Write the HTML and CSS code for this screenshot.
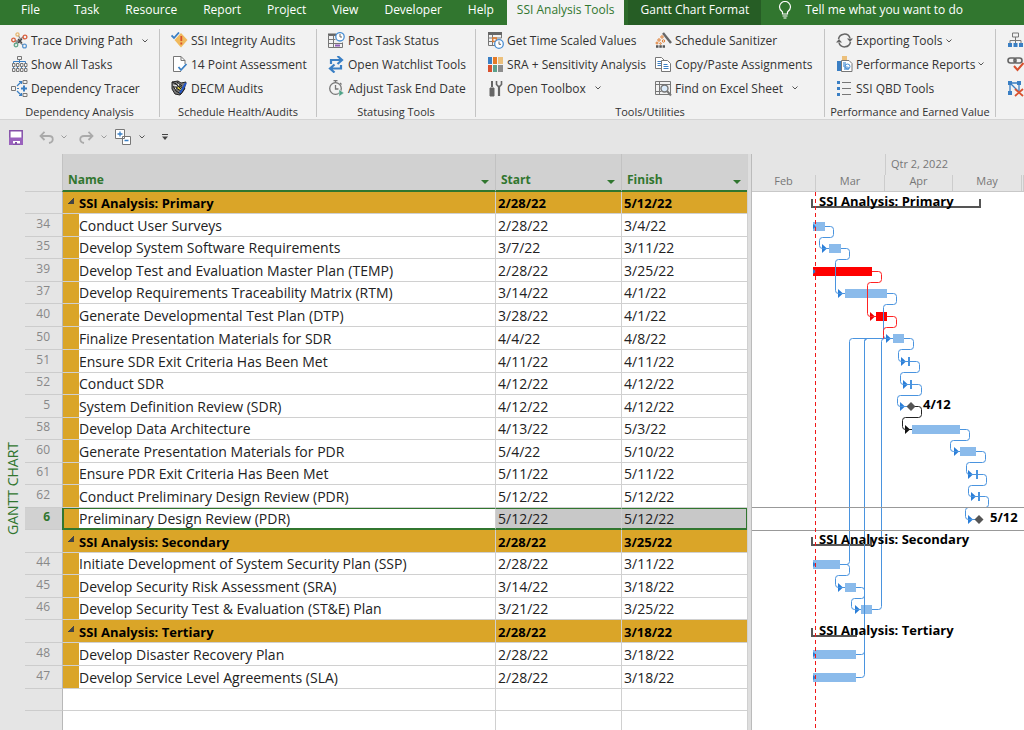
FILE: index.html
```html
<!DOCTYPE html>
<html lang="en">
<head>
  <meta charset="utf-8">
  <meta name="viewport" content="width=device-width, initial-scale=1">
  <title>SSI Analysis Tools</title>
  <link rel="stylesheet" href="styles.css">
</head>
<body>
  <nav class="tabs">
    <button class="tab tab-file">File</button>
    <button class="tab">Task</button>
    <button class="tab">Resource</button>
    <button class="tab">Report</button>
    <button class="tab">Project</button>
    <button class="tab">View</button>
    <button class="tab">Developer</button>
    <button class="tab">Help</button>
    <button class="tab active">SSI Analysis Tools</button>
    <button class="tab context">Gantt Chart Format</button>
    <button class="tab tell-me">
      <svg width="14" height="18" viewBox="0 0 14 18" fill="none" stroke="#fff" stroke-width="1.2"><path d="M4.5 13v-2C2.500 9.500 1.500 8 1.500 6a5.500 5.500 0 0 1 11 0c0 2-1 3.500-3 5v2zM4.500 15h5M5.500 17h3"/></svg>
      Tell me what you want to do
    </button>
  </nav>

  <header class="ribbon">
    <section class="group">
      <div class="tools">
        <button class="tool">
          <svg class="icon" viewBox="0 0 17 17" fill="none" stroke-width="1.3"><path d="M4 9h3l5 4M4 12l8-7M7 3l3 5" stroke="#888"/><circle cx="2.500" cy="8" r="1.800" stroke="#d9603f"/><circle cx="14" cy="5" r="1.900" stroke="#d9603f"/><circle cx="6.500" cy="2.500" r="1.600" stroke="#e9b872"/><circle cx="5" cy="13" r="1.800" stroke="#63a98c"/><circle cx="13.500" cy="14" r="1.900" stroke="#5b96d0"/><path d="M7 7l4 4M11 7l-4 4" stroke="#444"/></svg>
          Trace Driving Path
          <svg class="chev wide" viewBox="0 0 6 4"><path d="M.5.5L3 3 5.500.5"/></svg>
        </button>
        <button class="tool">
          <svg class="icon" viewBox="0 0 17 17" fill="none" stroke="#777"><path d="M6.500.5h4v3h-4z"/><path d="M8.500 4v3M2.500 8V5.500h12V8M2.500 11v2M6.500 11v2M10.500 11v2M14.500 11v2" stroke="#3a7fc4"/><path d="M1.500 7.500h2.500v3H1.500zM5.500 7.500H8v3H5.500zM9.500 7.500H12v3H9.500zM13.500 7.500H16v3h-2.500zM1.500 12.500h2.500v3H1.500zM5.500 12.500H8v3H5.500zM9.500 12.500H12v3H9.500zM13.500 12.500H16v3h-2.500z"/></svg>
          Show All Tasks
        </button>
        <button class="tool">
          <svg class="icon" viewBox="0 0 17 17" fill="none" stroke="#777"><path d="M.5 6.500h4v4h-4zM12 .5h4v3h-4zM12 13.500h4v3h-4z"/><path d="M10 8.500h6M13 5.500v6" stroke="#3a7fc4" stroke-width="2"/><path d="M6 8.500h2M6 6l4-4M6 11l4 4M8 1.500h2.500V4M8 15.500h2.500V13" stroke="#3a7fc4" stroke-width="1.200"/></svg>
          Dependency Tracer
        </button>
      </div>
      <h2 class="group-name">Dependency Analysis</h2>
    </section>

    <section class="group">
      <div class="tools">
        <button class="tool">
          <svg class="icon" viewBox="0 0 17 17" fill="none"><path d="M10 1l6.500 7L10 15.500 3.500 8z" fill="#f0b95c"/><path d="M10.300 4v5M10.300 10.500v2" stroke="#d9502c" stroke-width="1.800"/><path d="M.5 3.500L3 6l5-5.500" stroke="#3a7fc4" stroke-width="1.800"/></svg>
          SSI Integrity Audits
        </button>
        <button class="tool">
          <svg class="icon" viewBox="0 0 17 17" fill="none"><path d="M14 8V4.500L10 .5H2.500v15H10M10 .5v4h4" stroke="#777" fill="#fff"/><path d="M7.500 11l2.500 3 5.500-6" stroke="#3a7fc4" stroke-width="1.800"/></svg>
          14 Point Assessment
        </button>
        <button class="tool">
          <svg class="icon" viewBox="0 0 17 17" fill="none" stroke="#222"><path d="M1 2l6-1 3 2 5-1-2 8-4 5-5-1-3-5z" fill="#777"/><path d="M2 5l5 1 1-3M3 9l5-2 4 3" stroke="#eee"/><path d="M5 8l5 3 2-3-4-2z" fill="#d8c840"/><path d="M1 2l4 2M2 6l3 5 5 3 4-6M4 3l7 7M6 2l5 4"/><path d="M9 13l6-10" stroke="#2456c8" stroke-width="2"/></svg>
          DECM Audits
        </button>
      </div>
      <h2 class="group-name">Schedule Health/Audits</h2>
    </section>

    <section class="group">
      <div class="tools">
        <button class="tool">
          <svg class="icon" viewBox="0 0 17 17" fill="none"><path d="M8 3.500H.5v12h14v-5M.5 7.500h7M.5 11.500h14M5.500 3.500v12" stroke="#777"/><path d="M0 2.500h8" stroke="#666" stroke-width="2"/><path d="M7 13.500h5" stroke="#8e5bb5" stroke-width="2"/><circle cx="12" cy="4.800" r="4.200" fill="#fff" stroke="#4a8fd4" stroke-width="1.300"/><path d="M12 2v3h2" stroke="#666"/></svg>
          Post Task Status
        </button>
        <button class="tool">
          <svg class="icon" viewBox="0 0 17 17" fill="none" stroke="#3a7fc4" stroke-width="2.200"><path d="M3 8V4h11M9.500 0l4.500 4-4.500 4"/><path d="M13 9v3.500H2M6.500 8.500l-4.500 4 4.500 4"/></svg>
          Open Watchlist Tools
        </button>
        <button class="tool">
          <svg class="icon" viewBox="0 0 17 17" fill="none" stroke="#777" stroke-width="1.300"><circle cx="7.500" cy="8.500" r="5.800"/><path d="M5.500.7h4M7.500 1v2M7.500 5v4h3M12 3l1.500 1.500"/><path d="M11 9.500l5 3.500-5 3.500z" fill="#4fa388" stroke="#f2f2f2" stroke-width=".5"/></svg>
          Adjust Task End Date
        </button>
      </div>
      <h2 class="group-name">Statusing Tools</h2>
    </section>

    <section class="group">
      <div class="tools two-cols">
        <button class="tool">
          <svg class="icon" viewBox="0 0 17 17" fill="none"><path d="M1.500 1v12.500H8M14.500 1v5M1.500 6h13M5.500 3v10M1.500 9.500h4" stroke="#777"/><path d="M1 1.500h14" stroke="#666" stroke-width="3"/><path d="M5.800 6h3.500v3.500H5.800z" stroke="#e07a2c" stroke-width="1.300"/><circle cx="12" cy="12" r="4.300" fill="#fff" stroke="#4a8fd4" stroke-width="1.300"/><path d="M12 9.500v2.800h2" stroke="#666"/></svg>
          Get Time Scaled Values
        </button>
        <button class="tool">
          <svg class="icon" viewBox="0 0 17 17"><path fill="#3a7fc4" d="M1 1h4v7H1z"/><path fill="#e57a25" d="M6 1h4v7H6z"/><path fill="#ecc07c" d="M11 1h5v7h-5z"/><path fill="#d9512f" d="M1 9h4v7H1z"/><path fill="#5ca08b" d="M6 9h4v7H6z"/><path fill="#8d8d8d" d="M11 9h5v7h-5z"/></svg>
          SRA + Sensitivity Analysis
        </button>
        <button class="tool">
          <svg class="icon" viewBox="0 0 17 17" fill="none" stroke="#666"><path d="M5 1v6" stroke-width="2"/><path d="M3 8h4v8H3z" fill="#666"/><path d="M9.500 1v3.500L12 7l2.500-2.500V1" stroke-width="1.600"/><path d="M12 6.500V16" stroke-width="2.200"/></svg>
          Open Toolbox
          <svg class="chev wide" viewBox="0 0 6 4"><path d="M.5.5L3 3 5.500.5"/></svg>
        </button>
        <button class="tool">
          <svg class="icon" viewBox="0 0 17 17" fill="none"><path d="M8 1l8 10" stroke="#666" stroke-width="2.400"/><path d="M1 14.500h9" stroke="#555" stroke-width="2.400" stroke-dasharray="2.500 .8"/><g stroke="#e07a2c"><circle cx="7" cy="5" r="1.200"/><circle cx="4" cy="8" r="1.200"/><circle cx="8.500" cy="9" r="1.200"/><circle cx="2" cy="11" r="1"/><circle cx="5.500" cy="11.500" r=".8"/></g></svg>
          Schedule Sanitizer
        </button>
        <button class="tool">
          <svg class="icon" viewBox="0 0 17 17" fill="#fff" stroke="#777"><path d="M.5 1.500h6l3 3v8h-9z"/><path d="M2.500 5.500h4M2.500 7.500h4M2.500 9.500h4" stroke="#3a7fc4"/><path d="M6.500 4.500h6l3 3v8h-9z"/><path d="M8.500 8.500h4M8.500 10.500h5M8.500 12.500h5" stroke="#3a7fc4"/></svg>
          Copy/Paste Assignments
        </button>
        <button class="tool">
          <svg class="icon" viewBox="0 0 17 17" fill="none" stroke="#777"><path d="M.5 1.500h15v13H.5zM.5 4.500h15M.5 11.500h6M4.500 1.500v13"/><circle cx="9.500" cy="8.500" r="3.500" fill="#dcecfb" stroke-width="1.400"/><path d="M12 11l4 4.500" stroke-width="2"/></svg>
          Find on Excel Sheet
          <svg class="chev wide" viewBox="0 0 6 4"><path d="M.5.5L3 3 5.500.5"/></svg>
        </button>
      </div>
      <h2 class="group-name">Tools/Utilities</h2>
    </section>

    <section class="group">
      <div class="tools">
        <button class="tool">
          <svg class="icon" viewBox="0 0 17 17" fill="none" stroke="#666" stroke-width="1.500"><path d="M2.500 7a6 6 0 0 1 11.500-1M14.500 10A6 6 0 0 1 3 11"/><path d="M14 10l-3-3.500h6zM3 7L0 10.500h6z" fill="#666" stroke="none"/></svg>
          Exporting Tools
          <svg class="chev" viewBox="0 0 6 4"><path d="M.5.5L3 3 5.500.5"/></svg>
        </button>
        <button class="tool">
          <svg class="icon" viewBox="0 0 17 17" fill="none"><path fill="#3a7fc4" d="M1 5h4v10H1z"/><path fill="#ecc07c" d="M6 0h5v4H6z"/><path d="M5.500 15.500v-11H13l3 3v8z" fill="#fff" stroke="#777"/><path d="M7 6h3v4l3 1v3H8v-3H7z" fill="#8db9e4"/><circle cx="11.500" cy="10.500" r="2.500" stroke="#4a8fd4"/></svg>
          Performance Reports
          <svg class="chev" viewBox="0 0 6 4"><path d="M.5.5L3 3 5.500.5"/></svg>
        </button>
        <button class="tool">
          <svg class="icon" viewBox="0 0 17 17"><path d="M1 1h3v3H1zM1 7h3v3H1zM1 13h3v3H1z" fill="#3a7fc4"/><path d="M6 2.500h9M6 8.500h9M6 14.500h9" stroke="#777"/></svg>
          SSI QBD Tools
        </button>
      </div>
      <h2 class="group-name">Performance and Earned Value</h2>
    </section>

    <section class="group">
      <div class="tools">
        <button class="tool" aria-label="Hierarchy">
          <svg class="icon" viewBox="0 0 17 17" fill="none"><path d="M5.500 1h6v4h-6z" stroke="#777"/><path d="M8.500 5v7M3 12V8.500h11V12" stroke="#777"/><path d="M1 11h4v4H1zM6.500 11h4v4h-4zM12 11h4v4h-4z" fill="#3a7fc4"/></svg>
        </button>
        <button class="tool" aria-label="Check links">
          <svg class="icon" viewBox="0 0 17 17" fill="none" stroke="#666" stroke-width="1.600"><rect x="1" y="2" width="8" height="5" rx="2.500"/><rect x="7" y="2" width="8" height="5" rx="2.500"/><path d="M7 10l3.500 4 6-7" stroke="#d9512f" stroke-width="2"/></svg>
        </button>
        <button class="tool" aria-label="Remove links">
          <svg class="icon" viewBox="0 0 17 17" fill="none"><path d="M3 3h9v8M3 3v11M3 3l8 8" stroke="#3a7fc4" stroke-width="1.300"/><path d="M1 1h4v4H1zM10 1h4v4h-4zM1 11h4v4H1z" fill="#3a7fc4"/><path d="M8 9l8 7M16 9l-8 7" stroke="#d9512f" stroke-width="1.800"/></svg>
        </button>
      </div>
    </section>
  </header>

  <div class="quick">
    <button aria-label="Save"><svg width="14" height="15" viewBox="0 0 14 15" fill="none"><path d="M.8.8h12.400v13.400H.8z" fill="#fff" stroke="#8450a8" stroke-width="1.500"/><path d="M0 7.500h14V15h-3v-4H4v4H0z" fill="#9a62bd"/><path d="M6 12h2v2H6z" fill="#8450a8"/></svg></button>
    <button class="undo" aria-label="Undo"><svg width="15" height="13" viewBox="0 0 15 13" fill="none" stroke="#aaa" stroke-width="1.800"><path d="M5.500.8L1.500 5l4 4M2 5h8c5 0 5 6 0 7"/></svg></button>
    <button class="off" aria-label="Undo list"><svg class="chev" viewBox="0 0 6 4"><path d="M.5.5L3 3 5.500.5"/></svg></button>
    <button class="redo" aria-label="Redo"><svg width="15" height="13" viewBox="0 0 15 13" fill="none" stroke="#aaa" stroke-width="1.800"><path d="M9.500.8l4 4.200-4 4M13 5H5C0 5 0 11 5 12"/></svg></button>
    <button class="off" aria-label="Redo list"><svg class="chev" viewBox="0 0 6 4"><path d="M.5.5L3 3 5.500.5"/></svg></button>
    <button class="outline" aria-label="Outline"><svg width="16" height="16" viewBox="0 0 16 16" fill="#fff" stroke="#777"><path d="M.5.5h9v9h-9zM7.500 7.500h8v8h-8z"/><path d="M2.500 5h5M5 2.500v5M9.500 11.500h4" stroke="#3a7fc4" stroke-width="1.300"/></svg></button>
    <button class="list" aria-label="Outline list"><svg class="chev" viewBox="0 0 6 4"><path d="M.5.5L3 3 5.500.5"/></svg></button>
    <button class="more" aria-label="Customize toolbar"><svg width="6" height="6" viewBox="0 0 6 6"><path d="M0 .5h6" stroke="#444"/><path d="M0 2.500h6L3 6z" fill="#444"/></svg></button>
  </div>

  <main class="work">
    <div class="view-name"><span>GANTT CHART</span></div>

    <table class="sheet">
      <colgroup><col class="c-id"><col><col class="c-date"><col class="c-date"></colgroup>
      <thead>
        <tr><th class="corner"></th><th><div>Name</div></th><th><div>Start</div></th><th><div>Finish</div></th></tr>
      </thead>
      <tbody>
        <tr class="summary"><th></th><td>SSI Analysis: Primary</td><td>2/28/22</td><td>5/12/22</td></tr>
        <tr><th>34</th><td>Conduct User Surveys</td><td>2/28/22</td><td>3/4/22</td></tr>
        <tr><th>35</th><td>Develop System Software Requirements</td><td>3/7/22</td><td>3/11/22</td></tr>
        <tr><th>39</th><td>Develop Test and Evaluation Master Plan (TEMP)</td><td>2/28/22</td><td>3/25/22</td></tr>
        <tr><th>37</th><td>Develop Requirements Traceability Matrix (RTM)</td><td>3/14/22</td><td>4/1/22</td></tr>
        <tr><th>40</th><td>Generate Developmental Test Plan (DTP)</td><td>3/28/22</td><td>4/1/22</td></tr>
        <tr><th>50</th><td>Finalize Presentation Materials for SDR</td><td>4/4/22</td><td>4/8/22</td></tr>
        <tr><th>51</th><td>Ensure SDR Exit Criteria Has Been Met</td><td>4/11/22</td><td>4/11/22</td></tr>
        <tr><th>52</th><td>Conduct SDR</td><td>4/12/22</td><td>4/12/22</td></tr>
        <tr><th>5</th><td>System Definition Review (SDR)</td><td>4/12/22</td><td>4/12/22</td></tr>
        <tr><th>58</th><td>Develop Data Architecture</td><td>4/13/22</td><td>5/3/22</td></tr>
        <tr><th>60</th><td>Generate Presentation Materials for PDR</td><td>5/4/22</td><td>5/10/22</td></tr>
        <tr><th>61</th><td>Ensure PDR Exit Criteria Has Been Met</td><td>5/11/22</td><td>5/11/22</td></tr>
        <tr><th>62</th><td>Conduct Preliminary Design Review (PDR)</td><td>5/12/22</td><td>5/12/22</td></tr>
        <tr class="selected"><th>6</th><td>Preliminary Design Review (PDR)</td><td>5/12/22</td><td>5/12/22</td></tr>
        <tr class="summary"><th></th><td>SSI Analysis: Secondary</td><td>2/28/22</td><td>3/25/22</td></tr>
        <tr><th>44</th><td>Initiate Development of System Security Plan (SSP)</td><td>2/28/22</td><td>3/11/22</td></tr>
        <tr><th>45</th><td>Develop Security Risk Assessment (SRA)</td><td>3/14/22</td><td>3/18/22</td></tr>
        <tr><th>46</th><td>Develop Security Test &amp; Evaluation (ST&amp;E) Plan</td><td>3/21/22</td><td>3/25/22</td></tr>
        <tr class="summary"><th></th><td>SSI Analysis: Tertiary</td><td>2/28/22</td><td>3/18/22</td></tr>
        <tr><th>48</th><td>Develop Disaster Recovery Plan</td><td>2/28/22</td><td>3/18/22</td></tr>
        <tr><th>47</th><td>Develop Service Level Agreements (SLA)</td><td>2/28/22</td><td>3/18/22</td></tr>
        <tr class="empty"><th></th><td></td><td></td><td></td></tr>
        <tr class="empty"><th></th><td></td><td></td><td></td></tr>
      </tbody>
    </table>

    <div class="splitter"></div>

    <section class="gantt">
      <div class="timescale">
        <span class="quarter">Qtr 2, 2022</span>
        <span class="month">Feb</span>
        <span class="month">Mar</span>
        <span class="month">Apr</span>
        <span class="month">May</span>
        <span class="month"></span>
      </div>
      <svg class="chart" id="chart"></svg>
    </section>
  </main>

  <script src="gantt.js"></script>
</body>
</html>
```

FILE: styles.css
```css
* {
  box-sizing: border-box;
}

body {
  margin: 0;
  height: 100vh;
  overflow: hidden;
  display: flex;
  flex-direction: column;
  background: #e5e5e5;
  color: #333;
  font-family: "Open Sans", "Noto Sans", sans-serif;
  font-size: 12px;
}

button {
  display: flex;
  align-items: center;
  padding: 0;
  border: 0;
  background: none;
  color: inherit;
  font: inherit;
  white-space: nowrap;
}

/* tabs */
.tabs {
  display: flex;
  flex: none;
  height: 25px;
  background: #31762f;
  color: #fff;
}

.tab {
  padding: 0 13px 6px;
}

.tab-file {
  padding: 0 21px 6px;
}

.tab.active {
  padding: 0 10px 6px;
  background: #f2f2f2;
  color: #31762f;
}

.tab.context {
  padding: 0 12px 6px;
  border-left: 4px solid #2c6a2a;
  background: #265d25;
}

.tell-me {
  gap: 13px;
  padding-left: 17px;
}

/* ribbon */
.ribbon {
  display: grid;
  grid-template-columns: 160px 157px 159px 349px 171px 1fr;
  flex: none;
  height: 95px;
  padding-top: 4px;
  background: #f2f2f2;
  border-bottom: 1px solid #d4d4d4;
  overflow: hidden;
}

.group {
  display: flex;
  flex-direction: column;
  height: 88px;
  padding-left: 11px;
  border-right: 1px solid #c4c4c4;
}

.group:last-child {
  border: 0;
}

.tools {
  display: grid;
  grid-template-rows: 23px 24px 24px;
}

.two-cols {
  grid-auto-flow: column;
  grid-template-columns: 168px 1fr;
}

.tool {
  gap: 3px;
}

.icon {
  flex: none;
  width: 17px;
  height: 17px;
}

.chev {
  width: 6px;
  height: 4px;
  fill: none;
  stroke: #555;
}

.chev.wide {
  margin-left: 6px;
}

.group-name {
  margin: 4px 0 0 -11px;
  font-size: 11px;
  font-weight: 400;
  line-height: 15px;
  text-align: center;
  white-space: nowrap;
}

/* quick access bar */
.quick {
  display: flex;
  flex: none;
  height: 34px;
  padding-left: 9px;
}

.quick .undo {
  margin-left: 16px;
}

.quick .off {
  margin-left: 7px;
  opacity: .5;
}

.quick .redo {
  margin-left: 12px;
}

.quick .outline {
  margin-left: 8px;
}

.quick .list {
  margin-left: 8px;
}

.quick .more {
  margin-left: 17px;
}

/* work area */
.work {
  display: grid;
  grid-template-columns: 25px minmax(0, 723fr) 4px minmax(0, 272fr);
  flex: 1;
  min-height: 0;
}

.view-name {
  display: flex;
  justify-content: center;
  align-items: flex-start;
  padding-top: 288px;
  color: #31762f;
  font-size: 14px;
  line-height: 18px;
}

.view-name span {
  writing-mode: vertical-rl;
  transform: rotate(180deg);
}

.sheet {
  align-self: start;
  width: 100%;
  table-layout: fixed;
  border-collapse: separate;
  border-spacing: 0;
  border-right: 1px solid #d0d0d0;
  color: #222;
}

.c-id {
  width: 37px;
}

.c-date {
  width: 126px;
}

.sheet th,
.sheet td {
  padding: 0 0 0 2px;
  line-height: 20px;
  text-align: left;
  white-space: nowrap;
  overflow: hidden;
}

.sheet thead th {
  height: 38px;
  padding: 15px 6px 0 5px;
  background: #d1d1d1;
  border-bottom: 2px solid #31762f;
  border-left: 1px solid #c2c2c2;
  color: #31762f;
  font-weight: 700;
}

.sheet thead .corner {
  background: none;
  border-left: 0;
  border-bottom: 1px solid #ccc;
}

thead div {
  display: flex;
  justify-content: space-between;
  align-items: center;
}

thead div::after {
  content: "";
  margin-top: 4px;
  border: 4px solid transparent;
  border-top-color: #31762f;
  border-bottom: 0;
}

/* rows alternate 22 and 23px, every seventh is tall */
tbody tr {
  height: 22px;
}

tbody tr:nth-child(even),
tbody tr:nth-child(7n) {
  height: 23px;
}

.sheet tbody th {
  padding: 0 12px 3px 0;
  line-height: 18px;
  border-bottom: 1px solid #ccc;
  color: #888;
  font-weight: 400;
  text-align: right;
}

.sheet tbody td {
  padding-top: 1px;
  background: #fff;
  border-bottom: 1px solid #d0d0d0;
  border-left: 1px solid #d0d0d0;
  font-size: 14px;
}

.sheet tbody td:nth-child(2) {
  padding-left: 16px;
  border-left-color: #b8b8b8;
  background: linear-gradient(#daa528, #daa528) 0 0 / 16px 100% no-repeat #fff;
}

.sheet tbody .summary td {
  background: #daa528;
  color: #000;
  font-size: 13px;
  font-weight: 700;
}

.sheet tbody .summary td:nth-child(2) {
  background: linear-gradient(135deg, transparent 50%, #444 50%) 4px 6px / 7px 6px no-repeat #daa528;
}

.sheet tbody .empty td:nth-child(2) {
  background: #fff;
}

.sheet tbody .selected th {
  background: #d1d1d1;
  color: #31762f;
  font-weight: 700;
}

.sheet tbody .selected td {
  padding-top: 0;
  background-color: #c8c8c8;
  border-top: 1px solid #31762f;
  border-bottom: 2px solid #31762f;
  line-height: 19px;
}

.sheet tbody .selected td:nth-child(2) {
  padding-left: 15px;
  background-color: #fff;
  background-size: 15px 100%;
  border-left: 2px solid #31762f;
}

.sheet tbody .selected td:last-child {
  border-right: 1px solid #31762f;
}

.splitter {
  background: #dedede;
  border-right: 1px solid #bbb;
}

/* gantt */
.gantt {
  display: flex;
  flex-direction: column;
  min-width: 0;
  overflow: hidden;
}

.timescale {
  display: grid;
  grid-template-columns: 64px 69px 68px 69px 1fr;
  grid-template-rows: 21px 16px;
  flex: none;
  height: 38px;
  border-bottom: 1px solid #c8c8c8;
  color: #777;
  font-size: 11px;
  line-height: 15px;
}

.quarter {
  grid-column: 3 / -1;
  padding: 2px 0 0 5px;
  border-left: 1px solid #ccc;
}

.month {
  grid-row: 2;
  border-right: 1px solid #ccc;
  line-height: 11px;
  text-align: center;
}

.chart {
  flex: 1;
  width: 100%;
  background: #fff;
}

.bar {
  fill: #8bbbeb;
}

.bar.critical {
  fill: #f00;
}

.bracket {
  fill: none;
  stroke: #555;
  stroke-width: 2;
}

.link {
  fill: none;
  stroke: #4a94df;
}

.arrow {
  fill: #2a7ed8;
}

.link.critical {
  stroke: #f22;
}

.arrow.critical {
  fill: #e00;
}

.link.dark {
  stroke: #222;
}

.arrow.dark {
  fill: #111;
}

.tick {
  stroke: #4a94df;
  stroke-width: 2;
}

.milestone {
  fill: #555;
}

.chart-label {
  fill: #000;
  font-size: 13px;
  font-weight: 700;
}

.row-line {
  stroke: #999;
}

.status-date {
  fill: none;
  stroke: #f01818;
  stroke-dasharray: 4 3;
}
```

FILE: gantt.js
```js
const chart = document.getElementById('chart');

const rowY = [11, 34, 56, 79, 101, 124, 146, 169, 192, 214, 237, 259, 282, 304, 327, 349, 372, 395, 417, 440, 462, 485];

const bars = [
  { row: 1, from: 61, to: 73 },
  { row: 2, from: 77, to: 89 },
  { row: 3, from: 61, to: 120, type: 'critical' },
  { row: 4, from: 93, to: 135 },
  { row: 5, from: 124, to: 135, type: 'critical' },
  { row: 6, from: 141, to: 152 },
  { row: 10, from: 160, to: 208 },
  { row: 11, from: 208, to: 224 },
  { row: 16, from: 61, to: 88 },
  { row: 17, from: 93, to: 104 },
  { row: 18, from: 109, to: 120 },
  { row: 20, from: 61, to: 104 },
  { row: 21, from: 61, to: 104 }
];

// a link leaves at x1, turns down at out, comes back to back and ends in an arrow at tip
const links = [
  { row: 1, x1: 73, out: 81, back: 67, tip: 75, end: 77 },
  { row: 2, x1: 89, out: 97, back: 83, tip: 91, end: 93, down: 2 },
  { row: 4, x1: 135, out: 144, back: 131, tip: 139, end: 141, down: 2 },
  { row: 3, x1: 120, out: 129, back: 115, tip: 123, end: 124, down: 2, type: 'critical' },
  { row: 5, x1: 135, out: 144, back: 131, type: 'critical' },
  { row: 6, x1: 152, out: 161, back: 146, tip: 154, end: 157 },
  { row: 7, x1: 157, out: 167, back: 148, tip: 156, end: 159 },
  { row: 8, x1: 159, out: 169, back: 145, tip: 153, end: 159 },
  { row: 9, x1: 160, out: 169, back: 150, tip: 158, end: 160, type: 'dark' },
  { row: 10, x1: 208, out: 217, back: 198, tip: 207, end: 208 },
  { row: 11, x1: 224, out: 233, back: 214, tip: 221, end: 225 },
  { row: 12, x1: 225, out: 234, back: 216, tip: 224, end: 227 },
  { row: 13, x1: 227, out: 236, back: 213, tip: 221, end: 227 },
  { row: 16, x1: 88, out: 97, back: 83, tip: 91, end: 93 },
  { row: 17, x1: 104, out: 112, back: 99, tip: 108, end: 109 }
];

const summaries = [
  { row: 0, to: 228, text: 'SSI Analysis: Primary' },
  { row: 15, to: 119, text: 'SSI Analysis: Secondary' },
  { row: 19, to: 104, text: 'SSI Analysis: Tertiary' }
];

let out = '';

bars.forEach(b => {
  const y = rowY[b.row];
  out += `<rect class="bar ${b.type || ''}" x="${b.from}" y="${y - 4}" width="${b.to - b.from}" height="9"/>`;
  if (b.from === 61) out += `<path class="arrow" d="M61 ${y - 2}l3 2.5-3 2.5z"/>`;
});

summaries.forEach(s => {
  const y = rowY[s.row] + 4;
  out += `<path class="bracket" d="M60 ${y - 8}v8H${s.to}v-8"/>`;
});

// long links that climb to "Finalize Presentation Materials"
[[97, 88, 16], [112, 104, 20], [112, 104, 21], [129, 120, 18]].forEach(([x, from, row]) => {
  const top = rowY[6] + .5;
  const y = rowY[row] + .5;
  out += `<path class="link" d="M${from} ${y}H${x - 2.5}q3 0 3-3V${top + 3}q0-3 3-3H135"/>`;
});

links.forEach(l => {
  const y = rowY[l.row] + .5;
  const mid = y + 11;
  const type = l.type || '';
  const a = l.out + .5;
  const b = l.back + .5;
  const endY = rowY[l.row + (l.down || 1)] + .5;
  let d = `M${l.x1} ${y}H${a - 3}q3 0 3 3V${mid - 3}q0 3-3 3H${b + 3}q-3 0-3 3V${endY - 3}`;
  if (l.tip) {
    d += `q0 3 3 3H${l.end}`;
    out += `<path class="arrow ${type}" d="M${l.tip - 5} ${endY - 4.5}l5 4.500-5 4.500z"/>`;
  } else {
    d += 'v3';
  }
  out += `<path class="link ${type}" d="${d}"/>`;
});

[[7, 157], [8, 159], [12, 225], [13, 227]].forEach(([row, x]) => {
  out += `<path class="tick" d="M${x} ${rowY[row] - 4}v9"/>`;
});

[[9, 159, 171, '4/12'], [14, 227, 238, '5/12']].forEach(([row, x, tx, text]) => {
  const y = rowY[row];
  out += `<path class="milestone" d="M${x} ${y - 4}l4.500 4.500-4.500 4.500-4.500-4.500z"/>`;
  out += `<text class="chart-label" x="${tx}" y="${y + 3}">${text}</text>`;
});

summaries.forEach(s => {
  out += `<text class="chart-label" x="67" y="${rowY[s.row] + 3}">${s.text}</text>`;
});

out += '<line class="row-line" x1="0" x2="100%" y1="315.5" y2="315.5"/>';
out += '<line class="row-line" x1="0" x2="100%" y1="338.5" y2="338.5"/>';
out += '<path class="status-date" d="M63.5 0V2000"/>';

chart.innerHTML = out;
```
